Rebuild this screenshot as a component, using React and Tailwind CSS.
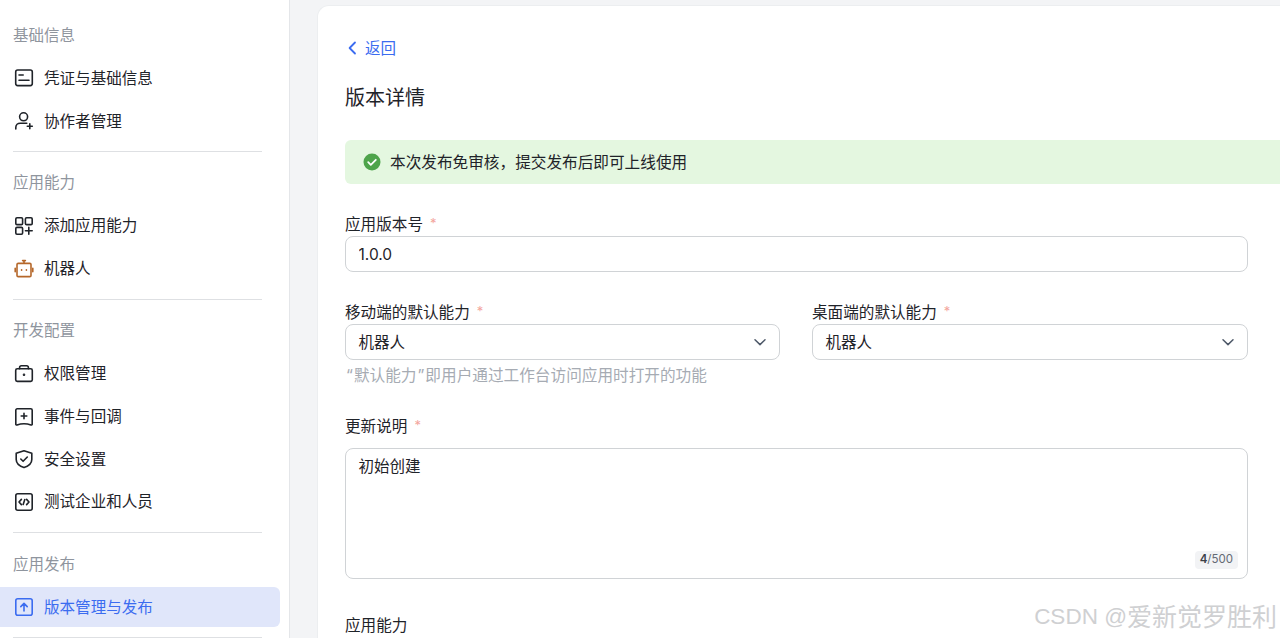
import React from "react";

const Icon = ({ className = "text-[#1f2329]", children }) => (
  <svg
    width="18"
    height="18"
    viewBox="0 0 18 18"
    fill="none"
    stroke="currentColor"
    strokeWidth="1.6"
    strokeLinecap="round"
    strokeLinejoin="round"
    className={`shrink-0 overflow-visible ${className}`}
  >
    {children}
  </svg>
);

const icons = {
  card: (
    <>
      <rect x="0.7" y="1" width="16.6" height="15.6" rx="2" />
      <path d="M4 6h4.2M4 11.2h10" />
    </>
  ),
  userPlus: (
    <>
      <circle cx="8.6" cy="4.8" r="4" />
      <path d="M0.8 17v-1.6c0-2.4 2-4.2 4.4-4.2h6.6" />
      <path d="M14.8 11.8v5M12.3 14.3h5" />
    </>
  ),
  grid: (
    <>
      <rect x="0.8" y="0.8" width="6.8" height="6.8" rx="1.2" />
      <rect x="10.4" y="0.8" width="6.8" height="6.8" rx="1.2" />
      <rect x="0.8" y="10.4" width="6.8" height="6.8" rx="1.2" />
      <path d="M13.8 10.4v6.8M10.4 13.8h6.8" />
    </>
  ),
  robot: (
    <>
      <rect x="2" y="3.4" width="14" height="13.2" rx="1.2" />
      <path d="M9 3.2V0.8M7.6 0.6h2.8M0.2 8.2v3.6M17.8 8.2v3.6" />
      <path d="M6.6 9.8v0.4M11.4 9.8v0.4" />
    </>
  ),
  lock: (
    <>
      <rect x="0.7" y="3.8" width="16.6" height="12.6" rx="1.6" />
      <path d="M4.6 3.8V2.6c0-1 .8-1.8 1.8-1.8h5.2c1 0 1.8.8 1.8 1.8v1.2" />
      <circle cx="9" cy="9.8" r="0.5" fill="currentColor" />
    </>
  ),
  event: (
    <>
      <path d="M0.8 2.2c0-.8.6-1.4 1.4-1.4h13.6c.8 0 1.4.6 1.4 1.4v14c0 .6-.6 1-1.2.8-4.6-1.6-9.4-1.6-14 0-.6.2-1.2-.2-1.2-.8z" />
      <path d="M9 5.2v5.6M6.2 8h5.6" />
    </>
  ),
  shield: (
    <>
      <path d="M9 .7l7.8 2.6v6.2c0 3.9-3.6 6.7-7.8 8.1-4.2-1.4-7.8-4.2-7.8-8.1V3.3z" />
      <path d="M5.8 9l2.3 2.3 4.2-4.3" />
    </>
  ),
  code: (
    <>
      <rect x="0.8" y="0.8" width="16.4" height="16.4" rx="2" />
      <path d="M6.4 6.4L4 9l2.4 2.6M11.6 6.4L14 9l-2.4 2.6M9.8 6.6L8.2 11.4" />
    </>
  ),
  upload: (
    <>
      <rect x="0.8" y="0.8" width="16.4" height="16.4" rx="2" />
      <path d="M9 13V5.6M5.8 8.6L9 5.4l3.2 3.2" />
    </>
  ),
};

const sections = [
  {
    title: "基础信息",
    gap: "gap-[3px]",
    titleLeading: "leading-[24px]",
    textPad: "pt-0.5",
    items: [
      { icon: "card", label: "凭证与基础信息" },
      { icon: "userPlus", label: "协作者管理" },
    ],
  },
  {
    title: "应用能力",
    gap: "gap-[3px]",
    titleLeading: "leading-[22px]",
    textPad: "",
    items: [
      { icon: "grid", label: "添加应用能力" },
      { icon: "robot", label: "机器人", color: "text-[#b5672a]" },
    ],
  },
  {
    title: "开发配置",
    gap: "gap-[2.67px]",
    titleLeading: "leading-[22px]",
    textPad: "",
    items: [
      { icon: "lock", label: "权限管理" },
      { icon: "event", label: "事件与回调" },
      { icon: "shield", label: "安全设置" },
      { icon: "code", label: "测试企业和人员" },
    ],
  },
  {
    title: "应用发布",
    gap: "gap-[3px]",
    titleLeading: "leading-[24px]",
    textPad: "pt-0.5",
    items: [{ icon: "upload", label: "版本管理与发布", active: true }],
  },
];

const Sidebar = () => (
  <aside className="w-[290px] shrink-0 bg-white border-r border-[#e4e6e9] pt-6">
    {sections.map((section) => (
      <div key={section.title}>
        <div className={`h-[22px] pl-[13px] text-[15.5px] text-[#8f959e] ${section.titleLeading}`}>
          {section.title}
        </div>
        <div className={`mt-3 flex flex-col ${section.gap}`}>
          {section.items.map((item) => (
            <div
              key={item.label}
              className={`h-10 w-[280px] flex items-center gap-[11px] pl-[15px] rounded-r-md text-[15.55px] ${
                item.active ? "bg-[#e0e6fa] text-[#3b6cf0]" : "text-[#1f2329]"
              }`}
            >
              <Icon className={item.active ? "text-[#3b6cf0]" : item.color || "text-[#1f2329]"}>
                {icons[item.icon]}
              </Icon>
              <span className={section.textPad}>{item.label}</span>
            </div>
          ))}
        </div>
        <div className="mt-2.5 mb-5 ml-[13px] w-[249px] h-px bg-[#dee0e3]" />
      </div>
    ))}
  </aside>
);

const Label = ({ text, required = true, className = "" }) => (
  <div className={`h-[22px] flex items-center text-[15.6px] text-[#1f2329] ${className}`}>
    <span className="pt-0.5">{text}</span>
    {required && <span className="ml-[7px] text-[13px] text-[#f3a59d]">*</span>}
  </div>
);

const Select = ({ label, className }) => (
  <div className={className}>
    <Label text={label} />
    <div className="mt-px h-9 flex items-center justify-between pl-[12.5px] pr-[12px] bg-white border border-[#d0d3d6] rounded-lg text-[15.5px] text-[#1f2329]">
      <span className="pt-0.5">机器人</span>
      <svg width="14" height="14" viewBox="0 0 14 14" fill="none" stroke="#4e5969" strokeWidth="1.5" strokeLinecap="round" strokeLinejoin="round">
        <path d="M2 4.8L7 9.6l5-4.8" />
      </svg>
    </div>
  </div>
);

export default function App() {
  return (
    <div
      className="relative flex h-screen overflow-hidden bg-[#f3f4f6]"
      style={{ fontFamily: 'Inter, "Noto Sans CJK SC", sans-serif' }}
    >
      <Sidebar />
      <main className="flex-1 min-w-0 pl-[27px] pt-[5px]">
        <div className="h-[700px] w-[1000px] bg-white border-t border-l border-[#eceef0] rounded-tl-xl pl-[27px] pt-[31px]">
          <div className="h-[22px] flex items-center gap-[7px] text-[15.5px] text-[#3b6cf0]">
            <svg width="11" height="14" viewBox="0 0 11 14" fill="none" stroke="currentColor" strokeWidth="1.8" strokeLinecap="round" strokeLinejoin="round" className="ml-[2px]">
              <path d="M8 1.5L2.6 7 8 12.5" />
            </svg>
            <span className="pt-0.5">返回</span>
          </div>
          <h1 className="mt-6 h-7 text-[20px] leading-[30px] font-normal text-[#1f2329]">版本详情</h1>

          <div className="mt-[29px] h-11 flex items-center gap-[9px] pl-[18px] bg-[#e4f7e0] rounded-l-md text-[15.65px] text-[#1f2329]">
            <svg width="18" height="18" viewBox="0 0 18 18">
              <circle cx="9" cy="9" r="8.5" fill="#4ea44b" />
              <path d="M5.2 9.2l2.6 2.6 5-5" fill="none" stroke="#fff" strokeWidth="1.8" strokeLinecap="round" strokeLinejoin="round" />
            </svg>
            <span className="pt-0.5">本次发布免审核，提交发布后即可上线使用</span>
          </div>

          <div className="w-[903px]">
            <Label text="应用版本号" className="mt-[29px]" />
            <input
              readOnly
              value="1.0.0"
              className="mt-px w-full h-9 px-[12.5px] bg-white border border-[#d0d3d6] rounded-lg text-[15.5px] text-[#1f2329] outline-none"
            />

            <div className="mt-[29px] flex gap-8">
              <Select label="移动端的默认能力" className="w-[435px]" />
              <Select label="桌面端的默认能力" className="flex-1" />
            </div>
            <div className="mt-1 h-[22px] text-[15.65px] leading-[23px] text-[#a6abb3]">
              <span className="px-px">“</span>默认能力<span className="px-px">”</span>即用户通过工作台访问应用时打开的功能
            </div>

            <Label text="更新说明" className="mt-[29px]" />
            <div className="relative mt-[11px] h-[131px]">
              <textarea
                readOnly
                value="初始创建"
                className="block w-full h-full resize-none px-[12.5px] py-[7px] bg-white border border-[#d0d3d6] rounded-lg text-[15.5px] leading-[22px] text-[#1f2329] outline-none"
              />
              <div className="absolute right-[10px] bottom-[10px] h-[18px] px-[5px] flex items-center bg-[#f2f3f5] rounded text-[11.5px] text-[#646a73]">
                <span className="font-semibold text-[#3c4148]">4</span>/500
              </div>
            </div>

            <Label text="应用能力" required={false} className="mt-[35px]" />
          </div>
        </div>
      </main>
      <div className="absolute right-[3px] top-[602px] flex items-center leading-[30px] text-[#cfd0d2] whitespace-nowrap">
        <span className="text-[22.5px]" style={{ fontFamily: '"Liberation Sans", sans-serif' }}>
          CSDN @
        </span>
        <span className="text-[25px]">爱新觉罗胜利</span>
      </div>
    </div>
  );
}
